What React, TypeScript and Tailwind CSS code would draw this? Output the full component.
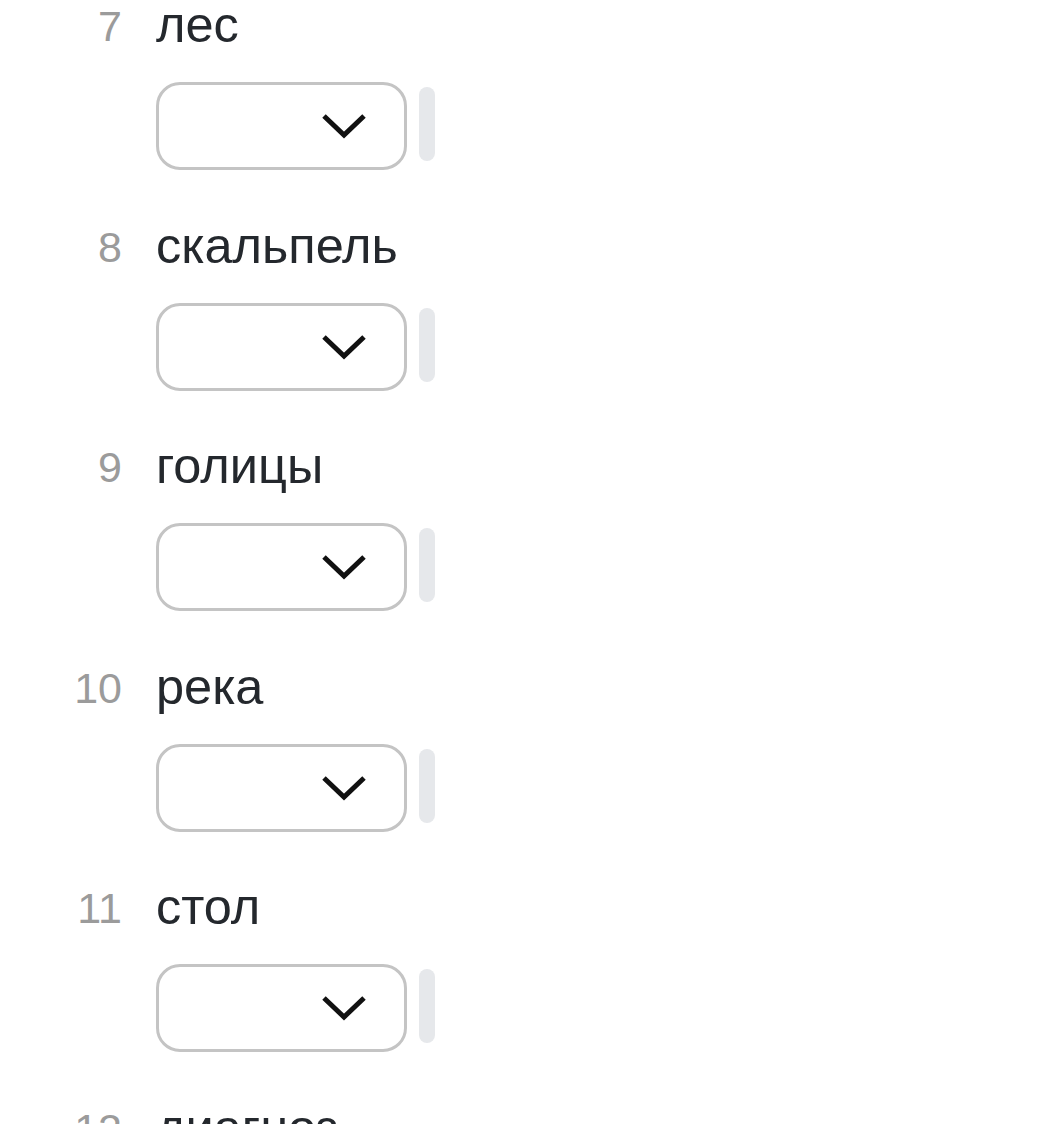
import React from 'react';

const words = [
  { n: 7, text: 'лес' },
  { n: 8, text: 'скальпель' },
  { n: 9, text: 'голицы' },
  { n: 10, text: 'река' },
  { n: 11, text: 'стол' },
  { n: 12, text: 'диагноз' },
];

const Chevron = () => (
  <svg width="46" height="26" viewBox="0 0 46 26" fill="none">
    <polyline
      points="3,3 23,22 43,3"
      stroke="#111111"
      strokeWidth="5"
      strokeLinecap="butt"
      strokeLinejoin="miter"
    />
  </svg>
);

const WordItem = ({ n, text }: { n: number; text: string }) => (
  <div className="flex flex-col h-[220.5px]">
    {/* number + word */}
    <div className="flex items-start h-[56px]">
      <div className="w-[122px] text-right text-[43px] leading-[58px] text-[#9b9b9b]">{n}</div>
      <div className="ml-[34px] text-[50.5px] leading-[56px] text-[#24282d]">{text}</div>
    </div>

    {/* answer select */}
    <div className="flex items-start gap-[12px] mt-[28.6px] ml-[156px]">
      <div className="w-[251px] h-[88px] border-[3px] border-[#c4c4c4] rounded-[24px] bg-white flex items-center justify-end pr-[37px]">
        <Chevron />
      </div>
      <div className="w-[16px] h-[74px] mt-[5px] rounded-full bg-[#e6e8eb]" />
    </div>
  </div>
);

export default function App() {
  return (
    <div
      className="w-[1047px] h-[1124px] overflow-hidden bg-white"
      style={{ fontFamily: '"Liberation Sans", Arial, sans-serif' }}
    >
      <div className="-mt-[2.6px]">
        {words.map((w) => (
          <WordItem key={w.n} n={w.n} text={w.text} />
        ))}
      </div>
    </div>
  );
}
